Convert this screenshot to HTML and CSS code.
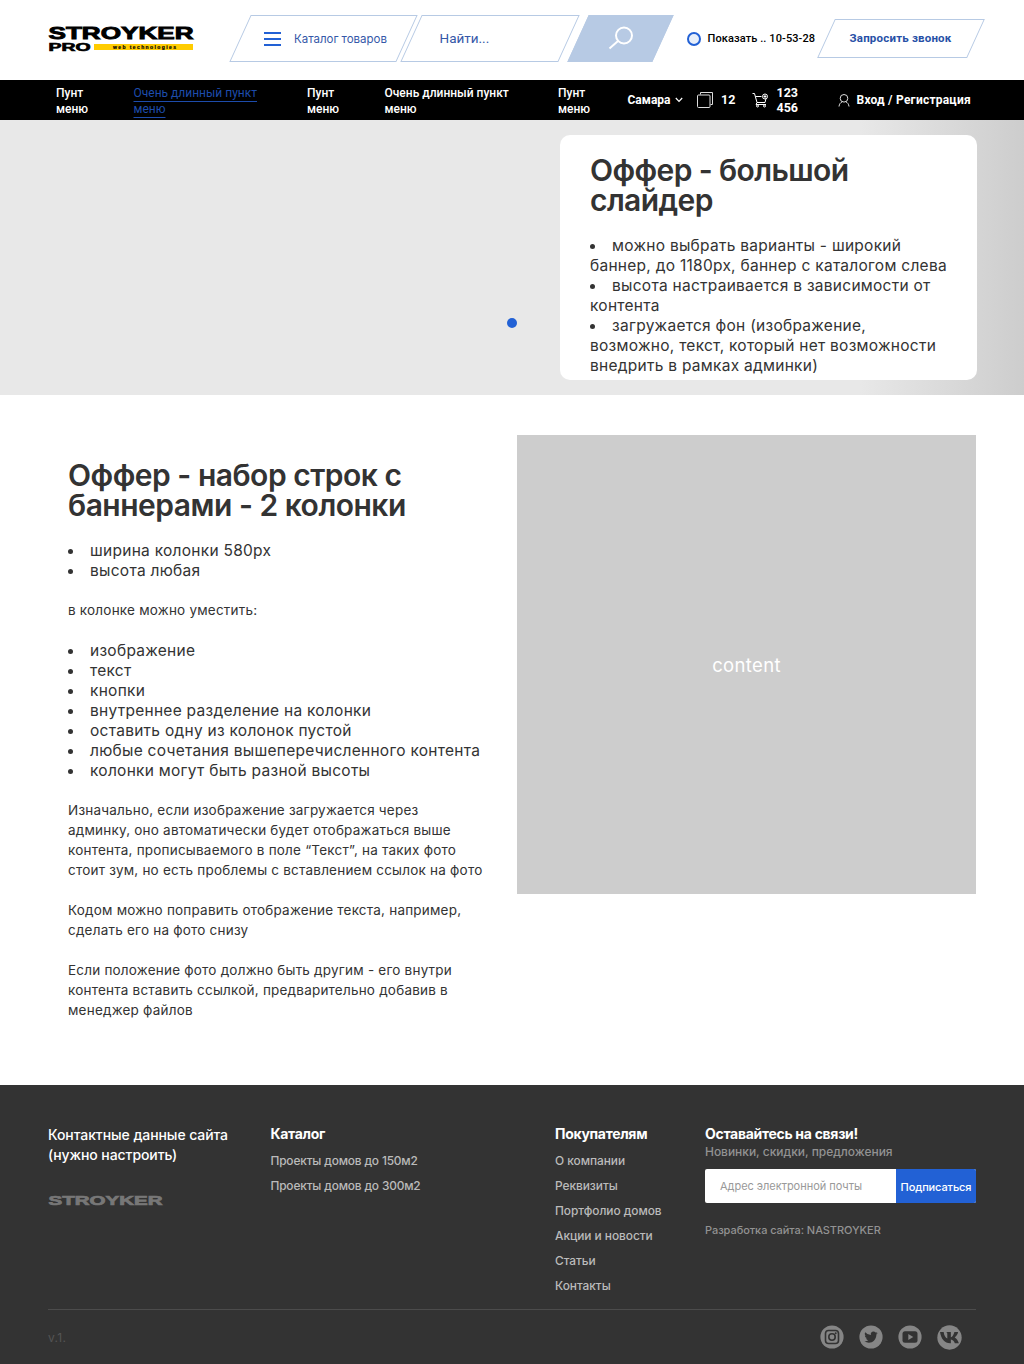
FILE: index.html
```html
<!DOCTYPE html>
<html lang="ru">
<head>
<meta charset="utf-8">
<title>Stroyker Pro</title>
<link rel="stylesheet" href="styles.css">
</head>
<body>
<header class="header">
  <a class="logo" aria-label="Stroyker Pro">
    <svg width="147" height="28" viewBox="0 0 147 28">
      <text class="logo-main" x="0.5" y="13.5" textLength="145" lengthAdjust="spacingAndGlyphs">STROYKER</text>
      <text class="logo-pro" x="0.5" y="25.5" textLength="42" lengthAdjust="spacingAndGlyphs">PRO</text>
      <rect x="46" y="19" width="99" height="6" fill="#ffcc00"/>
      <text class="logo-tag" x="65" y="23.500" textLength="63" lengthAdjust="spacing">web technologies</text>
    </svg>
  </a>
  <button class="slant catalog"><span class="burger"><i></i><i></i><i></i></span><span class="catalog-text">Каталог товаров</span></button>
  <div class="slant search">Найти...</div>
  <button class="slant search-btn" aria-label="Поиск">
    <svg width="26" height="24" viewBox="0 0 26 24" fill="none" stroke="#fff" stroke-width="2"><circle cx="16" cy="9.500" r="8"/><path d="M10 15 1.500 22.500"/></svg>
  </button>
  <div class="phone"><span class="ring"></span><span class="phone-text">Показать .. 10-53-28</span></div>
  <button class="slant call"><span class="call-text">Запросить звонок</span></button>
</header>

<nav class="nav">
  <div class="menu">
    <a>Пунт<br>меню</a>
    <a><span class="current">Очень длинный пункт<br>меню</span></a>
    <a>Пунт<br>меню</a>
    <a>Очень длинный пункт<br>меню</a>
    <a>Пунт<br>меню</a>
  </div>
  <a class="city">Самара <svg width="8" height="6" viewBox="0 0 8 6" fill="none" stroke="#fff" stroke-width="1.2"><path d="M.8 1 4 4.400 7.200 1"/></svg></a>
  <a class="compare"><svg width="16" height="16" viewBox="0 0 16 16" fill="none" stroke="#ddd"><path d="M3.500 2.500V.5h12v12h-2"/><rect x=".5" y="3" width="12.500" height="12.500" rx="1"/></svg><span>12</span></a>
  <a class="cart"><svg width="17" height="16" viewBox="0 0 17 16" fill="none" stroke="#fff"><path d="M.5 1.500h2l2.500 9h8l1-4M3.500 4.500h6M5 10.500l-1 2h10"/><circle cx="13" cy="4.500" r="2.500"/><path d="M13 3v3M11.500 4.500h3"/><circle cx="5.500" cy="14" r="1"/><circle cx="12.500" cy="14" r="1"/></svg><span>123<br>456</span></a>
  <a class="login"><svg width="12" height="13" viewBox="0 0 12 13" fill="none" stroke="#ddd"><circle cx="6" cy="4.300" r="3.800"/><path d="M1 12.500c.3-2.500 1.500-4 3.300-4.700M11 12.500c-.3-2.500-1.500-4-3.300-4.700"/></svg><span>Вход / Регистрация</span></a>
</nav>

<section class="hero">
  <span class="loader"></span>
  <div class="card">
    <h2>Оффер - большой<br>слайдер</h2>
    <ul>
      <li><span class="t">можно выбрать варианты - широкий</span><br>баннер, до 1180px, баннер с каталогом слева</li>
      <li><span class="t">высота настраивается в зависимости от</span><br>контента</li>
      <li><span class="t">загружается фон (изображение,</span><br>возможно, текст, который нет возможности<br>внедрить в рамках админки)</li>
    </ul>
  </div>
</section>

<main class="main">
  <article class="article">
    <h2>Оффер - набор строк с<br>баннерами - 2 колонки</h2>
    <ul>
      <li><span class="t">ширина колонки 580px</span></li>
      <li><span class="t">высота любая</span></li>
    </ul>
    <p>в колонке можно уместить:</p>
    <ul>
      <li><span class="t">изображение</span></li>
      <li><span class="t">текст</span></li>
      <li><span class="t">кнопки</span></li>
      <li><span class="t">внутреннее разделение на колонки</span></li>
      <li><span class="t">оставить одну из колонок пустой</span></li>
      <li><span class="t">любые сочетания вышеперечисленного контента</span></li>
      <li><span class="t">колонки могут быть разной высоты</span></li>
    </ul>
    <p>Изначально, если изображение загружается через<br>админку, оно автоматически будет отображаться выше<br>контента, прописываемого в поле “Текст”, на таких фото<br>стоит зум, но есть проблемы с вставлением ссылок на фото</p>
    <p>Кодом можно поправить отображение текста, например,<br>сделать его на фото снизу</p>
    <p>Если положение фото должно быть другим - его внутри<br>контента вставить ссылкой, предварительно добавив в<br>менеджер файлов</p>
  </article>
  <div class="placeholder">content</div>
</main>

<footer class="footer">
  <div class="columns">
    <div class="contacts">
      <p>Контактные данные сайта<br>(нужно настроить)</p>
      <svg width="116" height="12" viewBox="0 0 116 12"><text class="foot-logo" x="0.5" y="10.500" textLength="114" lengthAdjust="spacingAndGlyphs">STROYKER</text></svg>
    </div>
    <div class="links">
      <h3>Каталог</h3>
      <a>Проекты домов до 150м2</a>
      <a>Проекты домов до 300м2</a>
    </div>
    <div class="links">
      <h3>Покупателям</h3>
      <a>О компании</a>
      <a>Реквизиты</a>
      <a>Портфолио домов</a>
      <a>Акции и новости</a>
      <a>Статьи</a>
      <a>Контакты</a>
    </div>
    <div class="subscribe">
      <h3>Оставайтесь на связи!</h3>
      <p class="hint">Новинки, скидки, предложения</p>
      <div class="form"><span class="field">Адрес электронной почты</span><button class="send">Подписаться</button></div>
      <p class="dev">Разработка сайта: NASTROYKER</p>
    </div>
  </div>
  <div class="bottom">
    <span class="version">v.1.</span>
    <div class="social">
      <svg width="24" height="24" viewBox="0 0 24 24"><circle cx="12" cy="12" r="11.600" fill="#868686"/><g fill="none" stroke="#333" stroke-width="1.600"><rect x="5.500" y="5.500" width="13" height="13" rx="3"/><circle cx="12" cy="12" r="3.200"/></g><circle cx="15.700" cy="8.300" r="1" fill="#333"/></svg>
      <svg width="24" height="24" viewBox="0 0 24 24"><circle cx="12" cy="12" r="11.600" fill="#868686"/><path fill="#333" d="M18.700 8c-.5.200-1 .4-1.600.4.600-.3 1-.9 1.200-1.500-.5.300-1.100.5-1.700.7a2.700 2.700 0 0 0-4.700 2.500 7.800 7.800 0 0 1-5.600-2.900 2.700 2.700 0 0 0 .8 3.700c-.4 0-.8-.1-1.200-.3 0 1.300.9 2.400 2.200 2.700-.4.100-.8.100-1.200 0 .3 1.100 1.300 1.900 2.500 1.900a5.500 5.500 0 0 1-4 1.100c5.600 3.500 12-.2 12-6.900.5-.4 1-.9 1.300-1.400z"/></svg>
      <svg width="24" height="24" viewBox="0 0 24 24"><circle cx="12" cy="12" r="11.600" fill="#868686"/><rect x="4.500" y="6.300" width="15" height="11.400" rx="2.500" fill="#333"/><path fill="#868686" d="m10.300 9 5 3-5 3z"/></svg>
      <svg width="25" height="25" viewBox="0 0 24 24"><circle cx="12" cy="12" r="11.700" fill="#868686"/><path fill="#333" d="M12.600 17.500C7.400 17.500 4 13.500 2.900 6.700h3.500c.4 3.600 1.800 5.500 3.500 6.200V8.500c0-.8-.4-1-1-1.300.2-.4.6-.6 1.200-.6h3.200v5.200c1.600-.4 2.800-2.600 3.400-5.100h3.600c-.3 1.900-1.700 4-3.300 5.200 1.900 1 3.200 2.900 4 5.600h-3.900c-.6-1.900-1.900-3.300-3.800-3.500v3.500z"/></svg>
    </div>
  </div>
</footer>
</body>
</html>
```

FILE: styles.css
```css
* { box-sizing: border-box; margin: 0; padding: 0; }
body { width: 1024px; background: #fff; color: #333; font-family: Inter, "Noto Sans", sans-serif; }
button { border: 0; background: none; font: inherit; color: inherit; }
ul { list-style: none; }
svg { display: block; flex: none; overflow: visible; }

.header { display: flex; height: 80px; padding-left: 48px; font-family: Roboto, sans-serif; }
.logo { width: 192px; padding-top: 25px; }
.logo text { font-family: "Liberation Sans", sans-serif; font-weight: 700; stroke: #000; stroke-width: .9px; }
.logo-main { font-size: 17px; }
.logo .logo-pro { font-size: 10px; stroke-width: .6px; }
.logo .logo-tag { font-size: 5px; stroke-width: .2px; }

.slant { position: relative; z-index: 0; display: flex; align-items: center; height: 47px; margin-top: 15px; white-space: nowrap; }
.slant::before { content: ""; position: absolute; z-index: -1; inset: 0; border: 1px solid #b7cae4; transform: skewX(-24.500deg); }
.catalog { width: 166.500px; padding-left: 24px; gap: 13px; color: #3558a8; font-size: 11.500px; letter-spacing: -.02px; font-family: Inter, sans-serif; }
.burger { display: grid; gap: 4px; width: 17px; }
.burger i { height: 2px; background: #2261d5; }
.search { width: 158px; margin-left: 4.500px; padding: 0 0 2px 28.500px; color: #3558a8; font-size: 13.500px; }
.search-btn { width: 85px; margin-left: 8.500px; padding: 0 0 1px 30px; }
.search-btn::before { background: #b7cae4; }
.phone { display: flex; align-items: center; height: 76px; width: 139.500px; margin-left: 24px; gap: 7px; color: #000; font-size: 11px; font-weight: 500; white-space: nowrap; letter-spacing: .1px; }
.ring { width: 14px; height: 14px; border: 2px solid #2261d5; border-radius: 50%; background: #e8effa; margin-top: 2px; }
.call { width: 150px; height: 39px; margin-top: 19px; padding: 0 0 2px 23.500px; color: #2750a6; font-size: 11.500px; font-weight: 700; letter-spacing: .2px; }

.nav { display: flex; align-items: center; height: 40px; padding-left: 56px; background: #000; color: #fff; font: 500 12px/16px Roboto, sans-serif; white-space: nowrap; }
.menu { display: grid; grid-template-columns: 77.500px 173.500px 77.500px 173.500px 69.500px; margin-top: 1px; }
.current { color: #1d4cac; font-weight: 400; text-decoration: underline; text-underline-offset: 4px; text-decoration-thickness: 1px; }
.city, .compare, .cart, .login { display: flex; align-items: center; font-weight: 700; }
.city { width: 69.500px; gap: 5px; }
.compare { width: 54.500px; gap: 8px; font-size: 12.500px; }
.cart { width: 86px; gap: 8px; font-size: 12.500px; line-height: 15px; }
.login { gap: 7px; letter-spacing: .23px; }

h2 { font-size: 30px; font-weight: 600; line-height: 30px; letter-spacing: -.5px; white-space: nowrap; }
.card h2 { letter-spacing: -.6px; }
li { position: relative; font-size: 15.500px; line-height: 20px; letter-spacing: .27px; white-space: nowrap; }
li::before { content: ""; position: absolute; left: 0; top: 8px; width: 5px; height: 5px; border-radius: 50%; background: #333; }
.t { padding-left: 22px; }

.hero { display: flex; justify-content: flex-end; position: relative; height: 275px; padding: 15px 47px 0 0; background: linear-gradient(90deg, #e8e8e8 0 860px, #cdcdcd 1024px); }
.loader { position: absolute; left: 507px; top: 198px; width: 10px; height: 10px; border-radius: 50%; background: #2261d5; }
.card { width: 417px; height: 245px; padding: 20px 30px 0; border-radius: 10px; background: #fff; }
.card ul { margin-top: 21px; }

.main { display: flex; justify-content: space-between; height: 690px; padding: 40px 48px 0 68px; }
.article { padding-top: 25px; }
.article ul, .article p { margin-top: 20px; }
.article h2 + ul { margin-top: 21px; }
.article p { position: relative; top: -1px; font-size: 13.500px; line-height: 20px; white-space: nowrap; letter-spacing: .21px; }
.placeholder { display: grid; place-items: center; width: 459px; height: 459px; background: #cdcdcd; color: #fff; font-size: 18.500px; letter-spacing: .35px; }

.footer { height: 279px; padding: 0 48px; background: #333; }
.columns { display: grid; grid-template-columns: 222.500px 284.500px 150px 271px; height: 225px; padding-top: 40px; border-bottom: 1px solid #4c4c4c; white-space: nowrap; }
.contacts p { color: #fff; font-size: 14px; line-height: 20px; font-weight: 500; letter-spacing: -.08px; }
.contacts svg { margin-top: 29px; }
.foot-logo { font: 700 12.500px "Liberation Sans", sans-serif; fill: #777; stroke: #777; stroke-width: .7px; }
.footer h3 { height: 18px; margin-bottom: 4.500px; color: #fff; font-size: 14px; font-weight: 700; line-height: 18px; letter-spacing: -.3px; }
.links a { display: block; height: 25px; color: #bbb; font-size: 11.900px; font-weight: 500; line-height: 25px; letter-spacing: -.04px; }
.links:nth-child(2) a { letter-spacing: -.17px; }
.subscribe .hint { margin-top: -5px; color: #929292; font-size: 12px; font-weight: 500; line-height: 18px; letter-spacing: -.03px; }
.form { display: flex; height: 34px; margin-top: 8.500px; border-radius: 2px; overflow: hidden; background: #fff; }
.field { width: 191px; padding-left: 15px; color: #999; font-size: 11px; line-height: 34px; letter-spacing: -.03px; }
.send { width: 80px; background: #2261d5; color: #fff; font-size: 11px; font-weight: 500; line-height: 36px; letter-spacing: -.1px; }
.dev { margin-top: 18px; color: #929292; font-size: 11px; font-weight: 500; line-height: 18px; letter-spacing: -.06px; }
.bottom { display: flex; justify-content: space-between; align-items: center; height: 54px; padding-right: 14.500px; }
.version { color: #555; font-size: 12px; letter-spacing: .3px; }
.social { display: flex; gap: 15px; }
```
